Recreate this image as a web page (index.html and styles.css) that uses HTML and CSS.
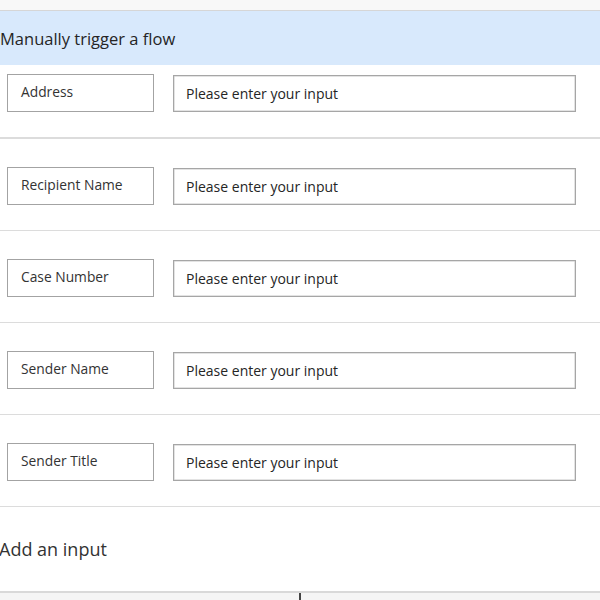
FILE: index.html
```html
<!DOCTYPE html>
<html>
<head>
<meta charset="utf-8">
<link rel="stylesheet" href="styles.css">
</head>
<body>
<div class="topstrip"></div>
<div class="header">Manually trigger a flow</div>
<div class="rows">
  <div class="row first">
    <div class="label">Address</div>
    <div class="input">Please enter your input</div>
  </div>
  <div class="row">
    <div class="label">Recipient Name</div>
    <div class="input">Please enter your input</div>
  </div>
  <div class="row">
    <div class="label">Case Number</div>
    <div class="input">Please enter your input</div>
  </div>
  <div class="row">
    <div class="label">Sender Name</div>
    <div class="input">Please enter your input</div>
  </div>
  <div class="row">
    <div class="label">Sender Title</div>
    <div class="input">Please enter your input</div>
  </div>
</div>
<div class="add">Add an input</div>
<div class="footer"><div class="connector"></div></div>
</body>
</html>
```
FILE: styles.css
```css
html, body {
  margin: 0;
  padding: 0;
  background: #ffffff;
  font-family: "Open Sans", "Noto Sans", sans-serif;
  color: #323130;
  overflow: hidden;
}
.topstrip {
  height: 10px;
  background: #f8f8f8;
  border-bottom: 1px solid #d6d6d6;
}
.header {
  height: 54px;
  background: #d8e9fc;
  font-size: 16.5px;
  line-height: 56px;
  padding-left: 0;
  color: #252525;
}
.row {
  display: flex;
  align-items: flex-start;
  padding: 28px 0 25px 7px;
  border-bottom: 1px solid #dcdcdc;
  height: 38px;
}
.row.first {
  padding-top: 9px;
  border-bottom-width: 2px;
  height: 38px;
}
.label {
  box-sizing: border-box;
  width: 147px;
  height: 38px;
  border: 1px solid #a3a3a3;
  padding: 8px 0 0 13px;
  font-size: 13.8px;
  line-height: 18px;
  color: #333;
}
.input {
  box-sizing: border-box;
  margin-left: 19px;
  margin-top: 1px;
  width: 403px;
  height: 37px;
  border: 1px solid #a6a6a6;
  box-shadow: inset 0 0 0 0.5px #c8c8c8;
  padding: 0 0 0 12px;
  font-size: 14px;
  line-height: 35px;
  color: #252525;
}
.add {
  height: 84px;
  font-size: 18px;
  line-height: 84px;
  color: #333;
  border-bottom: 2px solid #d9d9d9;
  margin-left: -1px;
}
.footer {
  height: 20px;
  background: #f5f5f5;
  display: flex;
  justify-content: center;
}
.connector {
  width: 2px;
  height: 20px;
  background: #444;
}
```
